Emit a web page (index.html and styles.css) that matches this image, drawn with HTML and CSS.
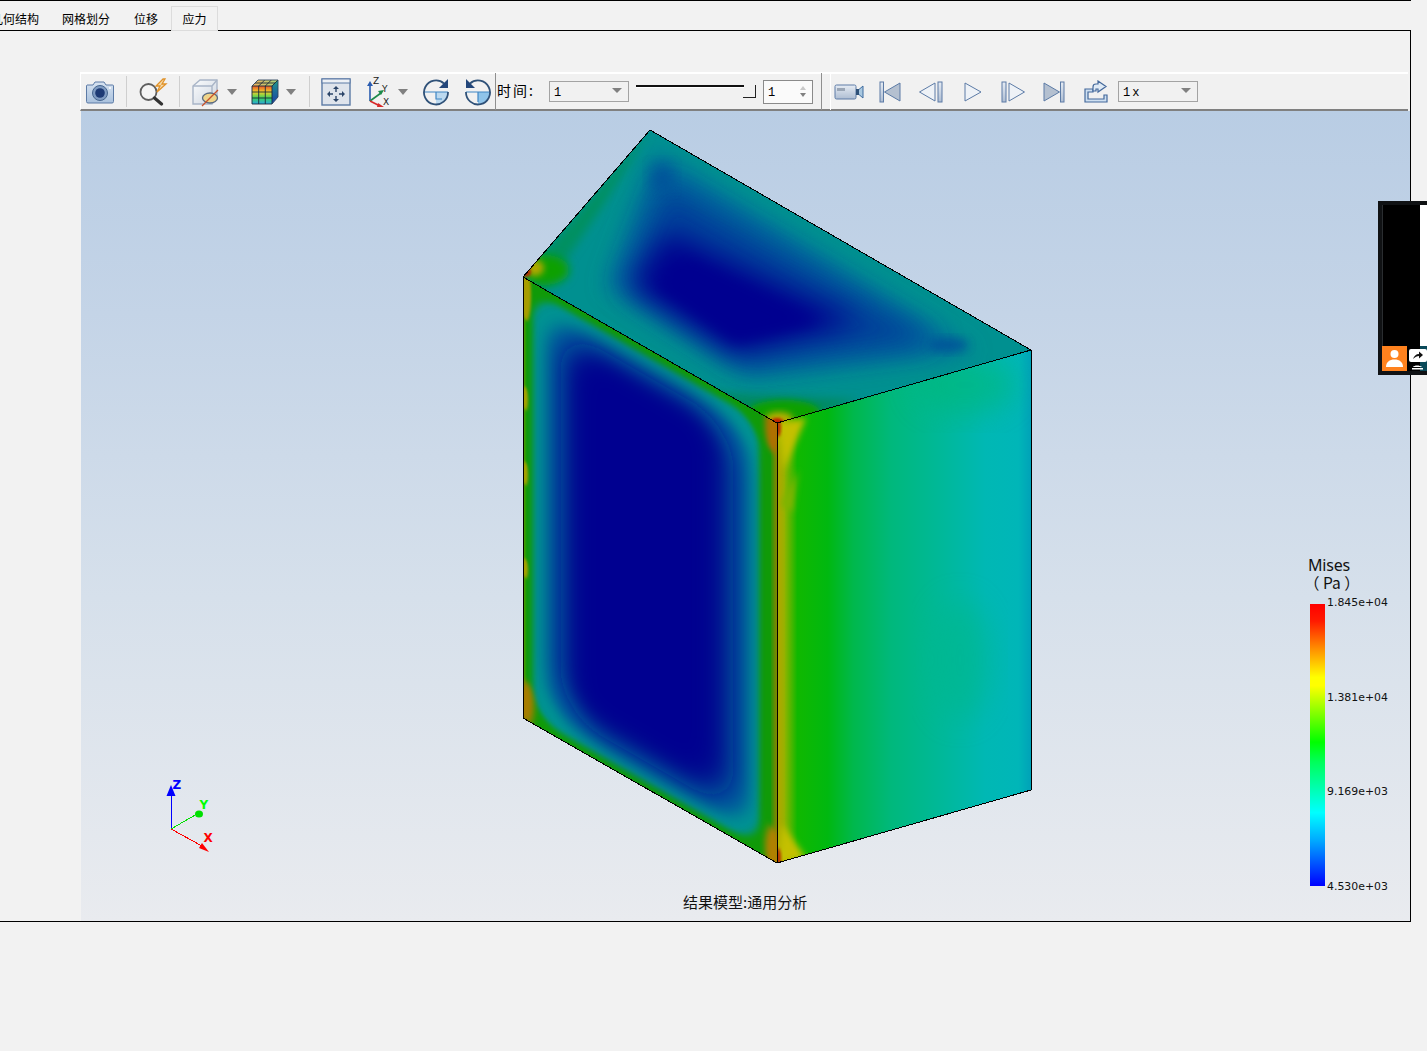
FILE: index.html
```html
<!DOCTYPE html>
<html lang="zh-CN">
<head>
<meta charset="utf-8">
<title>应力</title>
<link rel="stylesheet" href="styles.css">
</head>
<body>
<svg class="defs" width="0" height="0" aria-hidden="true">
  <defs>
    <filter id="b1" x="-30%" y="-30%" width="160%" height="160%"><feGaussianBlur stdDeviation="1.5"/></filter>
    <filter id="b3" x="-30%" y="-30%" width="160%" height="160%"><feGaussianBlur stdDeviation="3"/></filter>
    <filter id="b5" x="-30%" y="-30%" width="160%" height="160%"><feGaussianBlur stdDeviation="5"/></filter>
    <filter id="b7" x="-30%" y="-30%" width="160%" height="160%"><feGaussianBlur stdDeviation="7"/></filter>
    <filter id="b10" x="-30%" y="-30%" width="160%" height="160%"><feGaussianBlur stdDeviation="10"/></filter>
    <filter id="b14" x="-30%" y="-30%" width="160%" height="160%"><feGaussianBlur stdDeviation="14"/></filter>
    <linearGradient id="btn" x1="0" y1="0" x2="0" y2="1"><stop offset="0" stop-color="#e6ecf4"/><stop offset="1" stop-color="#aebdd2"/></linearGradient>
    <linearGradient id="cam" x1="0" y1="0" x2="0" y2="1"><stop offset="0" stop-color="#d7e3f1"/><stop offset="1" stop-color="#a9c1dd"/></linearGradient>
    <linearGradient id="cubeg" x1="0" y1="0" x2="1" y2="1"><stop offset="0" stop-color="#fbfcfd"/><stop offset="1" stop-color="#cdd5e0"/></linearGradient>
    <linearGradient id="heat" x1="0" y1="0" x2="0" y2="1"><stop offset="0" stop-color="#e8552a"/><stop offset=".33" stop-color="#f2d02a"/><stop offset=".66" stop-color="#3cd45a"/><stop offset="1" stop-color="#2aa6e0"/></linearGradient>
    <linearGradient id="heattop" x1="0" y1="0" x2="1" y2="0"><stop offset="0" stop-color="#eeb060"/><stop offset="1" stop-color="#a8d478"/></linearGradient>
    <linearGradient id="heatside" x1="0" y1="0" x2="0" y2="1"><stop offset="0" stop-color="#1f9a8a"/><stop offset="1" stop-color="#1b3fa8"/></linearGradient>
    <linearGradient id="bgR" gradientUnits="userSpaceOnUse" x1="777" y1="0" x2="1031" y2="0">
      <stop offset="0" stop-color="#a8ac00"/>
      <stop offset=".03" stop-color="#90b400"/>
      <stop offset=".08" stop-color="#10b800"/>
      <stop offset=".2" stop-color="#00b810"/>
      <stop offset=".3" stop-color="#00b84c"/>
      <stop offset=".45" stop-color="#00b87c"/>
      <stop offset=".64" stop-color="#00b898"/>
      <stop offset=".82" stop-color="#00b8b4"/>
      <stop offset=".95" stop-color="#00b6b8"/>
      <stop offset="1" stop-color="#00a2b8"/>
    </linearGradient>
    <clipPath id="cpLeft"><polygon points="523,277 777,423 777,863 523,718"/></clipPath>
    <clipPath id="cpTop"><polygon points="523,277 650,130 1031,350 777,423"/></clipPath>
    <clipPath id="cpRight"><polygon points="777,423 1031,350 1031,790 777,863"/></clipPath>
  </defs>
</svg>

<nav class="tabs">
  <span class="tab">几何结构</span>
  <span class="tab">网格划分</span>
  <span class="tab">位移</span>
  <span class="tab tab-active">应力</span>
</nav>

<main class="panel">
  <div class="toolbar">
    <svg class="ml5" width="28" height="24" viewBox="0 0 28 24"><path d="M1 5h6l2-3h9l2 3h6.500a1 1 0 0 1 1 1v15.500a1.500 1.500 0 0 1-1.500 1.500H2a1.500 1.500 0 0 1-1.500-1.500V6A1 1 0 0 1 1 5z" fill="url(#cam)" stroke="#5c7ba6"/><circle cx="14" cy="13" r="7.500" fill="#7f9bc2" stroke="#46668f"/><circle cx="14" cy="13" r="4.800" fill="#1d3a75"/><circle cx="24" cy="8" r="1" fill="#fff"/></svg>
    <span class="sep ml12"></span>
    <svg class="ml12" width="30" height="28" viewBox="0 0 30 28"><circle cx="9.500" cy="14" r="8" fill="#f5f5f5" stroke="#5f5f5f" stroke-width="1.800"/><path d="M15.500 20l7 6" stroke="#333" stroke-width="3.200" stroke-linecap="round"/><path d="M24 1l-7 7h4l-3 6 9-8h-4l3-5z" fill="#f6d9a8" stroke="#e0922a" stroke-width="1.300"/></svg>
    <span class="sep ml10"></span>
    <svg class="ml11" width="30" height="30" viewBox="0 0 30 30"><path d="M2 9l7-6h17v17l-5 7H2z" fill="url(#cubeg)" stroke="#a9b5c7" stroke-width="1.400"/><path d="M2 9h19v18M21 9l5-6" fill="none" stroke="#a9b5c7" stroke-width="1.400"/><ellipse cx="19" cy="21" rx="7.500" ry="5" fill="#eed48a" stroke="#5a6a80" stroke-width="1.300"/><path d="M11 29L27 13" stroke="#c8502a" stroke-width="1.300"/></svg>
    <span class="caret ml6"></span>
    <svg class="ml13" width="30" height="28" viewBox="0 0 30 28"><path d="M2 8l6-6h20v17l-6 7H2z" fill="url(#heatside)"/><path d="M2 8h20v18H2z" fill="url(#heat)"/><path d="M2 8l6-6h20l-6 6z" fill="url(#heattop)"/><path d="M2 8h20v18H2zM2 14h20M2 20h20M8.700 8v18M15.300 8v18M22 8l6-6M8.700 8l6-6M15.300 8l6-6M5 5h20" fill="none" stroke="#1c2a3a" stroke-width=".9"/><path d="M22 26l6-7V2H8L2 8" fill="none" stroke="#30455f" stroke-width=".9"/></svg>
    <span class="caret ml6"></span>
    <span class="sep ml13"></span>
    <svg class="ml11" width="30" height="28" viewBox="0 0 30 28"><rect x="1" y="1" width="28" height="26" fill="#dfe4ec" stroke="#5c7ba6" stroke-width="1.400"/><rect x="1" y="1" width="28" height="4" fill="#eef1f6" stroke="#5c7ba6"/><path d="M15 8l-3 3h6zM15 24l-3-3h6zM6 16l3-3v6zM24 16l-3-3v6z" fill="#2b4468"/><path d="M15 11v3M15 18v3M9 16h3M18 16h3" stroke="#2b4468" stroke-width="1.400"/></svg>
    <svg class="ml14 axes" width="27" height="30" viewBox="0 0 27 30"><path d="M5 24V8" stroke="#2a5cb0" stroke-width="1.600"/><path d="M5 4l-3 5h6z" fill="#2a5cb0"/><path d="M5 24l11-8" stroke="#1c8a4a" stroke-width="1.600"/><path d="M19 13l-6 1 3 4z" fill="#1c8a4a"/><path d="M5 24l10 5" stroke="#d82a2a" stroke-width="1.600"/><path d="M19 30l-6-4-1 4z" fill="#d82a2a"/><text x="8" y="7">Z</text><text x="17" y="15">Y</text><text x="18" y="28">X</text></svg>
    <span class="caret ml6"></span>
    <svg class="ml14" width="28" height="28" viewBox="0 0 28 28"><path d="M14 14h12a12 12 0 0 1-12 12z" fill="#bcd9ef"/><path d="M2 14h24M14 14v7h6" fill="none" stroke="#3f86c4" stroke-width="1.200"/><path d="M22 5.500A12 12 0 1 0 26 14" fill="none" stroke="#2f5178" stroke-width="1.800"/><path d="M26 1v9h-9z" fill="#23467a"/></svg>
    <svg class="ml14" width="28" height="28" viewBox="0 0 28 28"><path d="M14 14h12a12 12 0 0 1-12 12z" fill="#8fc4ea"/><path d="M2 14h24M14 14v10" fill="none" stroke="#3f86c4" stroke-width="1.200"/><path d="M6 5.500A12 12 0 1 1 2 14" fill="none" stroke="#2f5178" stroke-width="1.800"/><path d="M2 1v9h9z" fill="#23467a"/></svg>
    <span class="vline ml3"></span>
    <span class="time-label ml1">时间:</span>
    <span class="combo combo-time ml15">1<i class="combo-arrow"></i></span>
    <span class="slider ml7"><i class="slider-track"></i><i class="slider-handle"></i></span>
    <span class="spin ml7">1<i class="spin-arrows"><b class="up"></b><b class="down"></b></i></span>
    <span class="vline ml8"></span>
    <span class="wline ml8"></span>
    <svg class="ml3" width="30" height="18" viewBox="0 0 30 18"><rect x="1" y="2" width="21" height="14" rx="1.500" fill="url(#btn)" stroke="#5c7ba6"/><rect x="3" y="5" width="8" height="3" fill="#9aa6b6"/><path d="M22 9l7-6v12z" fill="#a9c8e0" stroke="#3f6da0"/><rect x="22" y="6" width="3" height="6" fill="#2f5178"/></svg>
    <svg class="ml15" width="22" height="22" viewBox="0 0 22 22"><rect x="1" y="1" width="3.500" height="20" fill="url(#btn)" stroke="#5c7ba6"/><path d="M21 2v18L5.500 11z" fill="#b4c0d0" stroke="#5c7ba6"/></svg>
    <svg class="ml17" width="26" height="22" viewBox="0 0 26 22"><path d="M17 2v18L1.500 11z" fill="#eef2f7" stroke="#5c7ba6"/><rect x="20" y="1" width="4" height="20" fill="url(#btn)" stroke="#5c7ba6"/></svg>
    <svg class="ml19" width="20" height="22" viewBox="0 0 20 22"><path d="M2 2v18l16-9z" fill="#eef2f7" stroke="#5c7ba6"/></svg>
    <svg class="ml17" width="26" height="22" viewBox="0 0 26 22"><rect x="2" y="1" width="4" height="20" fill="url(#btn)" stroke="#5c7ba6"/><path d="M9 2v18l15.500-9z" fill="#eef2f7" stroke="#5c7ba6"/></svg>
    <svg class="ml16" width="24" height="22" viewBox="0 0 24 22"><path d="M2 2v18l15.500-9z" fill="#b4c0d0" stroke="#5c7ba6"/><rect x="18.500" y="1" width="3.500" height="20" fill="url(#btn)" stroke="#5c7ba6"/></svg>
    <svg class="ml17" width="26" height="24" viewBox="0 0 26 24"><path d="M2 9v13h22v-7h-3v4H5V12h5V9z" fill="#cfe0f1" stroke="#44699c" stroke-width="1.200"/><path d="M10 11V7c0-2 1-3 3-3h2V1l8 5.500-8 5.500V9h-2v2z" fill="#dfeaf5" stroke="#44699c" stroke-width="1.200"/></svg>
    <span class="combo combo-speed ml9">1x<i class="combo-arrow"></i></span>
  </div>

  <section class="viewport">
    <svg class="scene" viewBox="81 111 1329 810" width="1329" height="810">
      <g clip-path="url(#cpTop)">
        <rect x="500" y="110" width="560" height="330" fill="#009090"/>
        <polygon points="523,277 650,130 600,210 545,290" fill="#009060" filter="url(#b5)"/>
        <polygon points="700,392 860,400 777,430" fill="#008a60" filter="url(#b5)"/>
        <polygon points="655,150 975,352 748,378 605,286" fill="#00709c" filter="url(#b10)"/>
        <polygon points="664,180 940,342 745,366 622,286" fill="#00409a" filter="url(#b14)"/>
        <polygon points="668,232 860,322 735,352 632,285" fill="#000090" filter="url(#b14)"/>
        <polygon points="690,262 820,322 735,342 655,285" fill="#000090" filter="url(#b7)"/>
        <ellipse cx="662" cy="178" rx="12" ry="14" fill="#00509a" opacity=".8" filter="url(#b7)"/>
        <ellipse cx="948" cy="345" rx="20" ry="7" fill="#00509a" opacity=".8" filter="url(#b5)"/>
        <ellipse cx="545" cy="270" rx="24" ry="15" fill="#10a000" filter="url(#b5)"/>
        <ellipse cx="535" cy="268" rx="9" ry="8" fill="#b0a800" filter="url(#b3)"/>
        <ellipse cx="526" cy="272" rx="5" ry="5" fill="#b02800" filter="url(#b1)"/>
        <ellipse cx="784" cy="412" rx="36" ry="12" fill="#10a000" filter="url(#b3)"/>
        <ellipse cx="779" cy="419" rx="14" ry="7" fill="#b8b000" filter="url(#b3)"/>
        <ellipse cx="777" cy="422" rx="7" ry="4" fill="#c02000" filter="url(#b1)"/>
      </g>

      <g clip-path="url(#cpRight)">
        <rect x="770" y="340" width="270" height="530" fill="url(#bgR)"/>
        <ellipse cx="965" cy="385" rx="50" ry="30" fill="#00b878" opacity=".6" filter="url(#b14)"/>
        <ellipse cx="960" cy="660" rx="30" ry="60" fill="#00b88c" opacity=".6" filter="url(#b14)"/>
        <rect x="774" y="450" width="8" height="400" fill="#aca800" filter="url(#b3)"/>
        <polygon points="777,423 806,418 784,470" fill="#c4c000" filter="url(#b3)"/>
        <polygon points="780,505 798,470 792,512" fill="#80b400" filter="url(#b3)"/>
        <polygon points="777,865 806,858 782,824" fill="#c4c000" filter="url(#b3)"/>
        <ellipse cx="778" cy="428" rx="3" ry="9" fill="#b83000" filter="url(#b1)"/>
        <ellipse cx="778" cy="858" rx="3" ry="10" fill="#b83000" filter="url(#b1)"/>
      </g>

      <g clip-path="url(#cpLeft)">
        <rect x="515" y="270" width="270" height="600" fill="#109a08"/>
        <g transform="matrix(1 .5748 0 1 523 277)">
          <rect x="10" y="8" width="226" height="426" rx="28" fill="#009392" filter="url(#b3)"/>
          <rect x="24" y="22" width="202" height="400" rx="34" fill="#00689e" filter="url(#b7)"/>
          <rect x="38" y="28" width="172" height="386" rx="42" fill="#00108f" filter="url(#b14)"/>
          <rect x="56" y="44" width="130" height="350" rx="30" fill="#000090" filter="url(#b10)"/>
          <rect x="-2" y="-2" width="4" height="444" fill="#5a9c00" filter="url(#b1)"/>
          <ellipse cx="3" cy="14" rx="5" ry="28" fill="#a89c00" filter="url(#b1)"/>
          <ellipse cx="3" cy="424" rx="8" ry="22" fill="#a87c00" filter="url(#b3)"/>
          <ellipse cx="2" cy="120" rx="3" ry="12" fill="#a8a000" filter="url(#b1)"/>
          <ellipse cx="2" cy="195" rx="3" ry="12" fill="#a8a000" filter="url(#b1)"/>
          <ellipse cx="2" cy="290" rx="3" ry="10" fill="#a8a000" filter="url(#b1)"/>
          <rect x="251" y="-4" width="8" height="450" fill="#a08000" filter="url(#b3)"/>
          <ellipse cx="250" cy="8" rx="8" ry="24" fill="#b07000" filter="url(#b3)"/>
          <ellipse cx="250" cy="430" rx="8" ry="24" fill="#b08000" filter="url(#b3)"/>
        </g>
      </g>

      <g class="edges">
        <polygon points="523,277 650,130 1031,350 1031,790 777,863 523,718"/>
        <polyline points="523,277 777,423 1031,350"/>
        <line x1="777.500" y1="423" x2="777.500" y2="863"/>
      </g>

      <g class="triad">
        <line x1="171" y1="829" x2="171" y2="792" stroke="#0000ff"/>
        <path d="M171 785l-4.500 11h9z" fill="#0000ff"/>
        <line x1="171" y1="829" x2="197" y2="814" stroke="#00e000"/>
        <ellipse cx="199" cy="814" rx="4" ry="3.500" fill="#00e000"/>
        <line x1="171" y1="829" x2="202" y2="846" stroke="#ff0000"/>
        <path d="M199 848l3-5 7 9z" fill="#ff0000"/>
        <text x="172.500" y="789" fill="#0000ff">Z</text>
        <text x="199.500" y="809" fill="#00ff00">Y</text>
        <text x="203.500" y="842" fill="#ff0000">X</text>
      </g>
    </svg>

    <div class="legend">
      <div class="legend-title">Mises</div>
      <div class="legend-unit">（ Pa ）</div>
      <div class="legend-body">
        <div class="legend-bar"></div>
        <ul class="legend-values">
          <li>1.845e+04</li>
          <li>1.381e+04</li>
          <li>9.169e+03</li>
          <li>4.530e+03</li>
        </ul>
      </div>
    </div>

    <div class="caption">结果模型:通用分析</div>
  </section>
</main>

<aside class="widget">
  <div class="widget-screen"><span class="widget-white"></span></div>
  <div class="widget-actions">
    <span class="avatar">
      <svg width="25" height="25" viewBox="0 0 25 25"><circle cx="12.500" cy="8" r="4" fill="#fff"/><path d="M4 21c0-5 3.500-7.500 8.500-7.500S21 16 21 21z" fill="#fff"/></svg>
    </span>
    <span class="share">
      <svg width="18" height="25" viewBox="0 0 18 25"><rect x="0" y="3" width="18" height="13" rx="2" fill="#fff"/><path d="M4 13c1-3 3-5 6-5V5.500l4 3.500-4 3.500V10c-2 0-4 1-6 3z" fill="#111"/><path d="M4 21c1-2 7-2 9 0z" fill="#fff"/><rect x="3" y="22" width="11" height="1.500" fill="#fff"/></svg>
    </span>
  </div>
</aside>
</body>
</html>
```

FILE: styles.css
```css
* { box-sizing: border-box; }

html, body {
  margin: 0;
  padding: 0;
  height: 1051px;
  overflow: hidden;
  background: #f2f2f2;
}

body {
  position: relative;
  font-family: "Noto Sans CJK SC", "Noto Sans", sans-serif;
  color: #000;
}

.defs { display: block; height: 0; }

/* Tabs */
.tabs {
  display: flex;
  height: 31px;
  padding-top: 6px;
  margin-left: -21px;
  border-top: 1px solid #000;
  border-bottom: 1px solid #000;
  width: 1432px;
  font-size: 12px;
}

.tab {
  display: flex;
  align-items: center;
  justify-content: center;
  height: 22px;
  padding: 0 12px;
}

.tab:first-child { padding-right: 11px; }

.tab-active {
  width: 47px;
  padding: 0 0 1px;
  margin-left: 1px;
  border: 1px solid #dcdcdc;
  height: 25px;
  margin-bottom: -1px;
  margin-top: -1px;
}

/* Panel */
.panel {
  width: 1411px;
  height: 891px;
  padding: 41px 0 0 81px;
  border-right: 1px solid #000;
  border-bottom: 1px solid #000;
}

/* Toolbar */
.toolbar {
  display: flex;
  align-items: center;
  width: 1328px;
  height: 39px;
  background: #f1f1f1;
  border-top: 2px solid #fff;
  border-left: 1px solid #fff;
  border-bottom: 2px solid #808080;
  margin-left: -1px;
}

.toolbar > svg { flex: none; display: block; }

.ml1 { margin-left: 1px; }
.ml3 { margin-left: 3px; }
.ml5 { margin-left: 5px; }
.ml6 { margin-left: 6px; }
.ml7 { margin-left: 7px; }
.ml8 { margin-left: 8px; }
.ml9 { margin-left: 9px; }
.ml10 { margin-left: 10px; }
.ml11 { margin-left: 11px; }
.ml12 { margin-left: 12px; }
.ml13 { margin-left: 13px; }
.ml14 { margin-left: 14px; }
.ml15 { margin-left: 15px; }
.ml16 { margin-left: 16px; }
.ml17 { margin-left: 17px; }
.ml19 { margin-left: 19px; }

.sep {
  flex: none;
  width: 1px;
  height: 31px;
  background: #cfcfcf;
}

.vline {
  flex: none;
  width: 1px;
  height: 37px;
  background: #8f8f8f;
}

.wline {
  flex: none;
  width: 1px;
  height: 37px;
  background: #fff;
}

.caret {
  flex: none;
  width: 0;
  height: 0;
  border-left: 5px solid transparent;
  border-right: 5px solid transparent;
  border-top: 6px solid #808080;
}

.axes text {
  font-family: "DejaVu Sans", sans-serif;
  font-size: 9px;
  fill: #222;
}

.time-label {
  flex: none;
  width: 37px;
  margin-bottom: 3px;
  font-size: 14px;
  line-height: 16px;
  letter-spacing: 2px;
  white-space: nowrap;
}

.combo {
  flex: none;
  position: relative;
  display: flex;
  align-items: center;
  width: 80px;
  height: 21px;
  padding: 2px 0 0 4px;
  border: 1px solid #a3a3a3;
  font-family: "Liberation Mono", monospace;
  font-size: 12px;
}

.combo-speed { letter-spacing: 2px; }

.combo-arrow {
  position: absolute;
  right: 6px;
  top: 6px;
  width: 0;
  height: 0;
  border-left: 5px solid transparent;
  border-right: 5px solid transparent;
  border-top: 5px solid #808080;
}

.slider {
  flex: none;
  position: relative;
  width: 120px;
  height: 24px;
}

.slider-track {
  position: absolute;
  left: 0;
  top: 5px;
  width: 108px;
  height: 3px;
  background: #111;
  border-bottom: 1px solid #fff;
}

.slider-handle {
  position: absolute;
  right: 0;
  top: 5px;
  width: 13px;
  height: 13px;
  border-right: 1px solid #222;
  border-bottom: 1px solid #222;
}

.spin {
  flex: none;
  position: relative;
  display: flex;
  align-items: center;
  width: 50px;
  height: 24px;
  padding: 2px 0 0 4px;
  background: #fafafa;
  border: 1px solid #8a8a8a;
  font-family: "Liberation Mono", monospace;
  font-size: 12px;
}

.spin-arrows {
  position: absolute;
  right: 6px;
  top: 5px;
  display: flex;
  flex-direction: column;
  gap: 3px;
}

.up, .down {
  width: 0;
  height: 0;
  border-left: 3px solid transparent;
  border-right: 3px solid transparent;
}

.up { border-bottom: 4px solid #c8c8c8; }
.down { border-top: 4px solid #808080; }

/* 3D viewport */
.viewport {
  position: relative;
  width: 1329px;
  height: 810px;
  background: linear-gradient(#b9cde4 0%, #c4d4e7 25%, #d6e0eb 60%, #e9ebef 100%);
}

.scene { display: block; }

.edges polygon, .edges polyline, .edges line {
  fill: none;
  stroke: #000;
  stroke-width: 1;
  shape-rendering: crispEdges;
}

.triad line { stroke-width: 1; shape-rendering: crispEdges; }

.triad text {
  font-family: "DejaVu Sans", sans-serif;
  font-weight: 700;
  font-size: 12px;
}

.legend {
  position: absolute;
  left: 1226px;
  top: 445px;
  width: 90px;
  color: #111;
}

.legend-title {
  font-family: "Noto Sans", sans-serif;
  font-size: 16px;
  line-height: 18px;
  height: 18px;
  margin-left: 1px;
  letter-spacing: -.2px;
}

.legend-unit {
  height: 30px;
  margin-left: -3px;
  font-size: 15.500px;
  line-height: 17px;
  white-space: nowrap;
}

.legend-body {
  display: flex;
  height: 282px;
  margin-left: 3px;
}

.legend-bar {
  flex: none;
  width: 15px;
  height: 282px;
  background: linear-gradient(#ff0000 0%, #ff1a00 6%, #ff9000 16%, #ffff00 26%, #ffff00 29%, #00ff00 49%, #00ff5a 56%, #00ffff 74%, #00a8ff 84%, #0000ff 100%);
}

.legend-values {
  list-style: none;
  margin: -8px 0 -7px 2px;
  padding: 0;
  display: flex;
  flex-direction: column;
  justify-content: space-between;
  font-family: "DejaVu Sans", sans-serif;
  font-size: 10.900px;
  line-height: 13px;
}

.caption {
  position: absolute;
  left: 602px;
  top: 781px;
  font-size: 15px;
  line-height: 20px;
  white-space: nowrap;
  color: #111;
}

/* Floating widget */
.widget {
  position: absolute;
  left: 1378px;
  top: 201px;
  width: 49px;
  height: 174px;
  padding: 4px 0 4px 4px;
  background: #101214;
  display: flex;
  flex-direction: column;
}

.widget-screen {
  flex: 1;
  display: flex;
  justify-content: flex-end;
  background: #000;
  border-left: 1px solid #2a2d30;
}

.widget-white {
  width: 7px;
  background: #fff;
}

.widget-actions {
  flex: none;
  display: flex;
  height: 25px;
  background: #000;
}

.avatar {
  flex: none;
  width: 25px;
  height: 25px;
  background: #ff821e;
}

.avatar svg, .share svg { display: block; }

.share {
  flex: none;
  width: 18px;
  margin-left: 2px;
  background: linear-gradient(90deg, #000 60%, #0a4a5a 60%);
}
```
